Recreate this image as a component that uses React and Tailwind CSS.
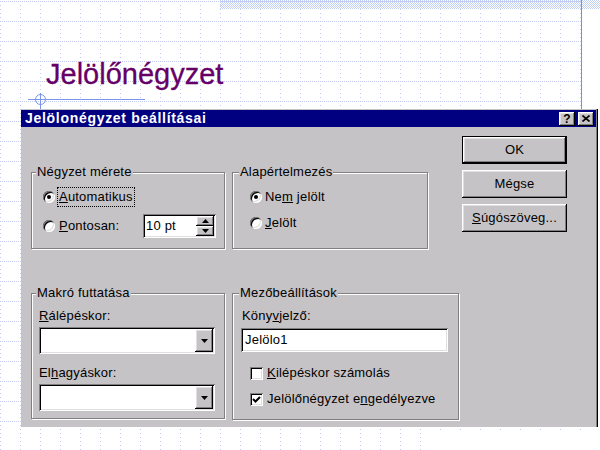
import React from 'react';

const raised = 'shadow-[inset_-1px_-1px_#000,inset_1px_1px_#fff,inset_-2px_-2px_#808080,inset_2px_2px_#dfdfdf]';
const sunken = 'shadow-[inset_1px_1px_#808080,inset_-1px_-1px_#fff,inset_2px_2px_#000,inset_-2px_-2px_#dfdfdf]';

const Radio = ({ checked }) => (
  <div className={`w-[12px] h-[12px] rounded-full bg-white flex items-center justify-center shrink-0 ${sunken}`}>
    {checked && <div className="w-[4px] h-[4px] rounded-full bg-black" />}
  </div>
);

const Checkbox = ({ checked }) => (
  <div className={`w-[13px] h-[13px] bg-white shrink-0 flex items-center justify-center ${sunken}`}>
    {checked && (
      <svg width="9" height="9" viewBox="0 0 9 9">
        <path d="M1 4 L3.5 6.5 L8 2" fill="none" stroke="#000" strokeWidth="2" />
      </svg>
    )}
  </div>
);

const Arrow = ({ up }) => (
  <svg width="7" height="4" viewBox="0 0 7 4">
    <polygon points={up ? '3.5,0 7,4 0,4' : '0,0 7,0 3.5,4'} fill="#000" />
  </svg>
);

const Combo = () => (
  <div className={`w-[176px] h-[27px] bg-white flex justify-end p-[2px] ${sunken}`}>
    <div className={`w-[18px] h-full bg-[#c6c3c6] flex items-center justify-center ${raised}`}>
      <Arrow />
    </div>
  </div>
);

const Group = ({ title, legendLeft, className, children }) => (
  <div className={`relative border border-[#808080] shadow-[inset_1px_1px_#fff,1px_1px_#fff] ${className}`}>
    <span className={`absolute top-[-9px] ${legendLeft} px-[1px] bg-[#c6c3c6] leading-[16px]`}>{title}</span>
    {children}
  </div>
);

const Button = ({ children, def }) => (
  <div className={`w-[105px] h-[28px] ${def ? 'border border-black' : ''}`}>
    <div className={`w-full h-full flex items-center justify-center ${raised}`}>{children}</div>
  </div>
);

export default function App() {
  return (
    <div className="relative w-[600px] h-[450px] bg-white overflow-hidden font-['Liberation_Sans',Arial,sans-serif] text-[13px] tracking-[0.2px] text-black">
      <svg className="absolute inset-0" width="600" height="450">
        <defs>
          <pattern id="grid" width="20" height="20" patternUnits="userSpaceOnUse" x="0" y="1">
            <rect x="0" y="0" width="1" height="1" fill="#c3caf2" />
            <rect x="2" y="0" width="1" height="1" fill="#c3caf2" />
            <rect x="4" y="0" width="1" height="1" fill="#c3caf2" />
            <rect x="6" y="0" width="1" height="1" fill="#c3caf2" />
            <rect x="8" y="0" width="1" height="1" fill="#c3caf2" />
            <rect x="10" y="0" width="1" height="1" fill="#c3caf2" />
            <rect x="12" y="0" width="1" height="1" fill="#c3caf2" />
            <rect x="14" y="0" width="1" height="1" fill="#c3caf2" />
            <rect x="16" y="0" width="1" height="1" fill="#c3caf2" />
            <rect x="18" y="0" width="1" height="1" fill="#c3caf2" />
            <rect x="0" y="4" width="1" height="1" fill="#c3caf2" />
            <rect x="0" y="8" width="1" height="1" fill="#c3caf2" />
            <rect x="0" y="12" width="1" height="1" fill="#c3caf2" />
            <rect x="0" y="16" width="1" height="1" fill="#c3caf2" />
          </pattern>
          <pattern id="vdots" width="20" height="4" patternUnits="userSpaceOnUse" x="0" y="1">
            <rect x="0" y="0" width="1" height="1" fill="#c3caf2" />
          </pattern>
          <pattern id="hatch" width="2" height="2" patternUnits="userSpaceOnUse">
            <rect x="0" y="0" width="1" height="1" fill="#c3d0f6" />
            <rect x="1" y="1" width="1" height="1" fill="#c3d0f6" />
          </pattern>
        </defs>
        <rect x="0" y="0" width="581" height="430" fill="url(#grid)" />
        <rect x="0" y="427" width="421" height="23" fill="url(#vdots)" />
        <rect x="220" y="0" width="380" height="9" fill="url(#hatch)" />
        <rect x="581" y="0" width="1" height="109" fill="#7090f0" />
        <rect x="28" y="99" width="117" height="1" fill="#7a96e8" />
        <circle cx="40.5" cy="99.5" r="5" fill="none" stroke="#7a96e8" strokeWidth="1" />
        <rect x="40" y="93" width="1" height="16" fill="#7a96e8" />
      </svg>

      <div className="relative pt-[60px]">
        <div className="pl-[46px] h-[29px] text-[29px] leading-[29px] tracking-normal text-[#660066] [-webkit-text-stroke:0.3px_#660066]">Jelölőnégyzet</div>

        <div className="ml-[21px] mt-[20px] w-[577px] h-[318px] bg-[#c6c3c6] border-r border-black shadow-[inset_-1px_0_#808080] pt-[1px] pr-[1px]">
          <div className="h-[17px] bg-[#000080] flex items-center pl-[4px] pr-[2px]">
            <span className="text-white font-bold text-[14px] tracking-[0.7px] leading-[17px]">Jelölonégyzet beállításai</span>
            <div className={`ml-auto w-[16px] h-[14px] bg-[#c6c3c6] flex items-center justify-center font-bold text-[12px] leading-none tracking-normal ${raised}`}>?</div>
            <div className={`ml-[3px] w-[16px] h-[14px] bg-[#c6c3c6] flex items-center justify-center ${raised}`}>
              <svg width="8" height="7" viewBox="0 0 8 7">
                <path d="M0.5 0.5 L7.5 6.5 M7.5 0.5 L0.5 6.5" stroke="#000" strokeWidth="1.6" />
              </svg>
            </div>
          </div>

          <div className="flex pl-[10px]">
            <div className="w-[428px] pt-[45px]">
              <div className="flex">
                <Group title="Négyzet mérete" legendLeft="left-[4px]" className="w-[194px] h-[77px] pt-[14px] pl-[11px] pr-[8px]">
                  <div className="h-[20px] flex items-center">
                    <Radio checked />
                    <div className="ml-[2px] h-[20px] px-[1px] border border-dotted border-black flex items-center">
                      <span><u>A</u>utomatikus</span>
                    </div>
                  </div>
                  <div className="mt-[7px] h-[24px] flex items-center">
                    <Radio />
                    <span className="ml-[4px]"><u>P</u>ontosan:</span>
                    <div className={`ml-auto w-[73px] h-[24px] bg-white flex items-stretch p-[2px] ${sunken}`}>
                      <span className="flex-1 pl-[1px] leading-[20px]">10 pt</span>
                      <div className="w-[18px] flex flex-col">
                        <div className={`h-[10px] bg-[#c6c3c6] flex items-center justify-center ${raised}`}><Arrow up /></div>
                        <div className={`h-[10px] bg-[#c6c3c6] flex items-center justify-center ${raised}`}><Arrow /></div>
                      </div>
                    </div>
                  </div>
                </Group>
                <Group title="Alapértelmezés" legendLeft="left-[6px]" className="ml-[7px] w-[196px] h-[77px] pt-[14px] pl-[17px]">
                  <div className="h-[20px] flex items-center">
                    <Radio checked />
                    <span className="ml-[3px]">Ne<u>m</u> jelölt</span>
                  </div>
                  <div className="mt-[6px] h-[20px] flex items-center">
                    <Radio />
                    <span className="ml-[3px]"><u>J</u>elölt</span>
                  </div>
                </Group>
              </div>

              <div className="flex mt-[44px]">
                <Group title="Makró futtatása" legendLeft="left-[4px]" className="w-[194px] h-[126px] pt-[14px] pl-[7px]">
                  <div className="h-[16px] leading-[16px]"><u>R</u>álépéskor:</div>
                  <div className="mt-[3px]"><Combo /></div>
                  <div className="mt-[11px] h-[16px] leading-[16px]">El<u>h</u>agyáskor:</div>
                  <div className="mt-[3px]"><Combo /></div>
                </Group>
                <Group title="Mezőbeállítások" legendLeft="left-[6px]" className="ml-[7px] w-[227px] h-[127px] pt-[14px] pl-[8px]">
                  <div className="h-[16px] leading-[16px] pl-[1px]">Köny<u>v</u>jelző:</div>
                  <div className={`mt-[4px] w-[207px] h-[24px] bg-white pl-[4px] leading-[24px] ${sunken}`}>Jelölo1</div>
                  <div className="mt-[13px] h-[16px] pl-[9px] flex items-center">
                    <Checkbox />
                    <span className="ml-[4px]"><u>K</u>ilépéskor számolás</span>
                  </div>
                  <div className="mt-[10px] h-[16px] pl-[9px] flex items-center">
                    <Checkbox checked />
                    <span className="ml-[4px]">Jelölőnégyzet e<u>n</u>gedélyezve</span>
                  </div>
                </Group>
              </div>
            </div>

            <div className="ml-[3px] pt-[9px] flex flex-col gap-[6px]">
              <Button def>OK</Button>
              <Button>Mégse</Button>
              <Button><span><u>S</u>úgószöveg...</span></Button>
            </div>
          </div>
        </div>
      </div>
    </div>
  );
}
